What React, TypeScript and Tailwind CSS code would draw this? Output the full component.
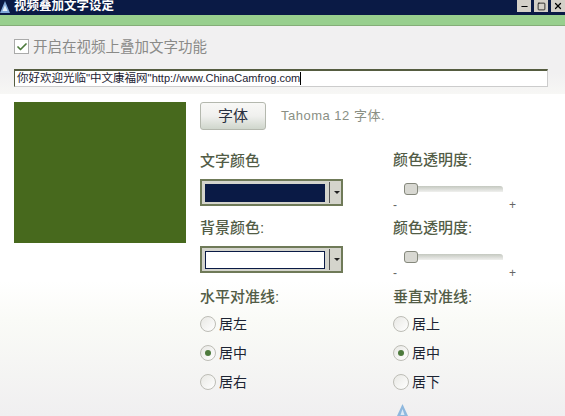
import { Check, X, Minus, Square } from "lucide-react";

const fonts = "font-['Liberation_Sans','Noto_Sans_CJK_SC',sans-serif]";

const Label = ({ children }: { children: React.ReactNode }) => (
  <div className="h-[20px] text-[15px] leading-[20px] font-medium text-[#525c46]">{children}</div>
);

const ColorCombo = ({ color }: { color: string }) => (
  <div className="flex h-[27px] w-[143px] items-center border-2 border-[#6f7a58] bg-[#d4d4cc] pl-[3px] pr-[1px]">
    <div className="h-[18px] w-[120px] border border-[#0a1a45]" style={{ backgroundColor: color }} />
    <div className="ml-[4px] h-[21px] w-px bg-[#555]" />
    <div className="ml-[4px] h-0 w-0 border-x-[3px] border-t-[3px] border-x-transparent border-t-[#222]" />
  </div>
);

const Slider = () => (
  <div className="ml-[11px] w-[99px]">
    <div className="relative h-[12px]">
      <div className="absolute left-0 right-0 top-[3px] h-[6px] rounded-t-[3px] bg-gradient-to-b from-[#c4c8c0] to-[#f0f0ee]" />
      <div className="absolute left-0 top-0 h-[12px] w-[14px] rounded-[3px] border border-[#85887c] bg-[#d8d8d2]" />
    </div>
    <div className="-ml-[11px] mt-[3px] flex w-[123px] justify-between text-[12px] leading-[14px] text-[#666]">
      <span>-</span>
      <span>+</span>
    </div>
  </div>
);

const Radio = ({ label, checked }: { label: string; checked?: boolean }) => (
  <div className="flex h-[29px] items-center gap-[3px]">
    <div className="flex h-[16px] w-[16px] items-center justify-center rounded-full border border-[#bdbdb6] bg-gradient-to-br from-[#e8e8e4] to-white">
      {checked && <div className="h-[6px] w-[6px] rounded-full bg-[#4d7a3c]" />}
    </div>
    <span className="text-[14px] leading-[20px] text-[#1c2433]">{label}</span>
  </div>
);

const WinButton = ({ children }: { children: React.ReactNode }) => (
  <div className="flex h-[12px] w-[14px] items-center justify-center bg-[#d4d0c8] text-black">
    {children}
  </div>
);

export default function App() {
  return (
    <div className={`flex h-[416px] w-[565px] flex-col overflow-hidden bg-white ${fonts}`}>
      {/* Title bar */}
      <div className="flex h-[15px] items-start justify-between bg-[#0a1a45]">
        <div className="flex items-center gap-[4px]">
          <svg width="10" height="12" viewBox="0 0 10 12">
            <path d="M5 0 L10 12 H0 Z" fill="#7fa8d8" />
            <path d="M5 4 L7.5 10 H2.5 Z" fill="#e6f0fa" />
          </svg>
          <span className="text-[12.5px] leading-[13px] font-bold text-white">视频叠加文字设定</span>
        </div>
        <div className="flex gap-[3px]">
          <WinButton><Minus size={9} strokeWidth={3} /></WinButton>
          <WinButton><Square size={9} strokeWidth={2} /></WinButton>
          <WinButton><X size={10} strokeWidth={3} /></WinButton>
        </div>
      </div>
      <div className="h-[11px] border-b border-[#84ad78] bg-[#98cf8e]" />

      {/* Checkbox and text input */}
      <div className="flex h-[69px] flex-col bg-gradient-to-b from-[#f1f0f1] from-[70%] to-[#f7f7f5] pl-[14px] pr-[17px]">
        <div className="mt-[11px] flex h-[20px] items-center gap-[4px]">
          <div className="flex h-[15px] w-[15px] items-center justify-center border border-[#aaa] bg-white">
            <Check size={12} strokeWidth={3.5} className="text-[#4d7a3c]" />
          </div>
          <span className="text-[14.5px] leading-[20px] text-[#8a8a88]">开启在视频上叠加文字功能</span>
        </div>
        <div className="mt-[12px] flex h-[18px] items-center border-t-2 border-l border-r border-b border-t-[#555c40] border-l-[#555c40] border-r-[#ccc] border-b-[#ccc] bg-white pl-[2px]">
          <span className="text-[11.5px] leading-[14px] text-[#223]">
            你好欢迎光临"中文康福网"<span className="text-[11px]">http://www.ChinaCamfrog.com</span>
          </span>
          <div className="h-[13px] w-px bg-black" />
        </div>
      </div>

      {/* Main content */}
      <div className="flex flex-1 bg-gradient-to-b from-white from-[58%] via-[#fafbf7] via-[70%] to-[#f0eff0] pl-[14px] pt-[8px]">
        <div className="h-[141px] w-[172px] bg-[#47691d]" />

        <div className="ml-[14px] flex flex-1 flex-col">
          <div className="flex h-[28px] items-center">
            <div className="flex h-[28px] w-[66px] items-center justify-center rounded-[3px] border border-[#b4b8ae] bg-gradient-to-b from-[#f8f8f6] via-[#f0f0ee] to-[#cfd6cc] text-[15px] text-[#2a3040]">
              字体
            </div>
            <div className="ml-[15px] text-[13px] tracking-[0.5px] text-[#8a8f84]">Tahoma 12 字体.</div>
          </div>

          <div className="grid grid-cols-[193px_1fr]">
            <div className="flex flex-col">
              <div className="mt-[21px]"><Label>文字颜色</Label></div>
              <div className="mt-[8px]"><ColorCombo color="#0a1a45" /></div>
              <div className="mt-[12px]"><Label>背景颜色:</Label></div>
              <div className="mt-[8px]"><ColorCombo color="#ffffff" /></div>
              <div className="mt-[14px]"><Label>水平对准线:</Label></div>
              <div className="mt-[2px] flex flex-col">
                <Radio label="居左" />
                <Radio label="居中" checked />
                <Radio label="居右" />
              </div>
            </div>

            <div className="flex flex-col">
              <div className="mt-[20px]"><Label>颜色透明度:</Label></div>
              <div className="mt-[13px]"><Slider /></div>
              <div className="mt-[6px]"><Label>颜色透明度:</Label></div>
              <div className="mt-[13px]"><Slider /></div>
              <div className="mt-[7px]"><Label>垂直对准线:</Label></div>
              <div className="mt-[2px] flex flex-col">
                <Radio label="居上" />
                <Radio label="居中" checked />
                <Radio label="居下" />
              </div>
              <svg width="11" height="12" viewBox="0 0 11 12" className="ml-[4px] mt-[8px] shrink-0">
                <path d="M5.5 0 L11 12 H0 Z" fill="#8fb8de" />
                <path d="M5.5 5 L7.5 11 H3.5 Z" fill="#dce9f6" />
              </svg>
            </div>
          </div>
        </div>
      </div>
    </div>
  );
}
